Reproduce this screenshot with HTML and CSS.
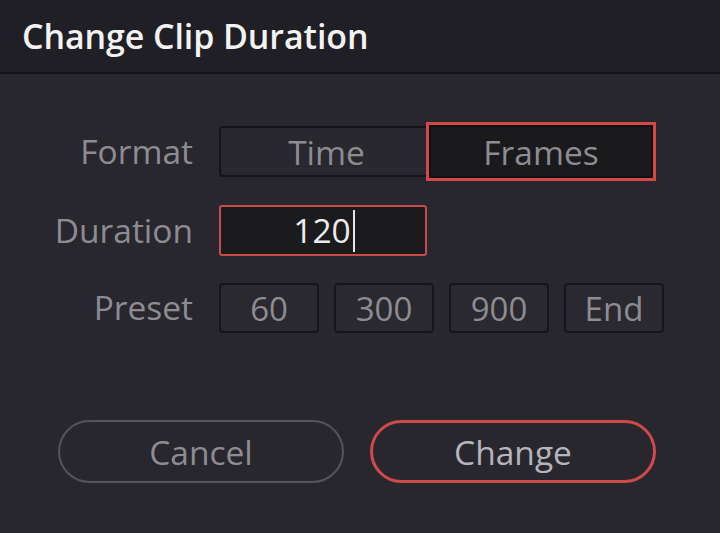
FILE: index.html
```html
<!DOCTYPE html>
<html>
<head>
<meta charset="utf-8">
<link rel="stylesheet" href="styles.css">
</head>
<body>
<div class="dialog">
  <div class="titlebar"><span class="title">Change Clip Duration</span></div>
  <div class="content">
    <div class="row row-format">
      <div class="label">Format</div>
      <div class="segmented">
        <div class="seg seg-time">Time</div>
        <div class="seg seg-frames">Frames</div>
      </div>
    </div>
    <div class="row row-duration">
      <div class="label">Duration</div>
      <div class="input"><span class="value">120</span><span class="caret"></span></div>
    </div>
    <div class="row row-preset">
      <div class="label">Preset</div>
      <div class="presets">
        <div class="preset">60</div>
        <div class="preset">300</div>
        <div class="preset">900</div>
        <div class="preset">End</div>
      </div>
    </div>
    <div class="actions">
      <div class="btn btn-cancel">Cancel</div>
      <div class="btn btn-change">Change</div>
    </div>
  </div>
</div>
</body>
</html>
```
FILE: styles.css
```css
html, body {
  margin: 0;
  padding: 0;
  background: #28272d;
  font-family: "Open Sans", "Noto Sans", sans-serif;
}
.dialog {
  width: 720px;
  height: 533px;
  overflow: hidden;
}
.titlebar {
  height: 72px;
  background: #201f25;
  border-bottom: 2px solid #141317;
  display: flex;
  align-items: center;
  padding-left: 22px;
}
.title {
  color: #f2f2f2;
  font-size: 34px;
  font-weight: 600;
  margin-top: -1px;
  letter-spacing: -0.1px;
}
.content {
  padding-top: 48px;
}
.row {
  display: flex;
  align-items: center;
}
.label {
  width: 193px;
  text-align: right;
  color: #8d8c92;
  font-size: 33.5px;
  margin-right: 26px;
  line-height: 1;
}
.row-format { height: 59px; }
.row-duration { height: 51px; margin-top: 24px; }
.row-preset { height: 50px; margin-top: 27px; }

.segmented {
  display: flex;
  align-items: center;
}
.seg {
  display: flex;
  align-items: center;
  justify-content: center;
  color: #8d8c92;
  font-size: 33.5px;
  box-sizing: border-box;
}
.seg-time {
  width: 209px;
  height: 51px;
  border: 2px solid #151418;
  border-right: none;
  border-radius: 4px 0 0 4px;
  background: #29282e;
  padding-left: 4px;
}
.seg-frames {
  width: 230px;
  height: 59px;
  border: 3px solid #d64848;
  background: #1a191c;
  margin-left: -2px;
  box-shadow: inset 0 0 0 2px #111013;
}

.input {
  width: 208px;
  height: 51px;
  box-sizing: border-box;
  border: 2px solid #c94a4a;
  border-radius: 3px;
  background: #1b1a1d;
  display: flex;
  align-items: center;
  justify-content: center;
  padding-left: 2px;
}
.value {
  color: #ececec;
  font-size: 33.5px;
  line-height: 1;
}
.caret {
  width: 2px;
  height: 42px;
  background: #e6e6e6;
  margin-left: 2px;
}

.presets {
  display: flex;
  gap: 15px;
}
.preset {
  width: 100px;
  height: 50px;
  box-sizing: border-box;
  border: 2px solid #161519;
  border-radius: 4px;
  background: #2a292f;
  display: flex;
  align-items: center;
  justify-content: center;
  color: #8d8c92;
  font-size: 33px;
}

.actions {
  display: flex;
  gap: 26px;
  margin-top: 87px;
  padding-left: 58px;
}
.btn {
  width: 286px;
  height: 63px;
  box-sizing: border-box;
  border-radius: 32px;
  display: flex;
  align-items: center;
  justify-content: center;
  font-size: 33.5px;
}
.btn-cancel {
  border: 2px solid #55545b;
  color: #8d8c92;
}
.btn-change {
  border: 3px solid #d04a4b;
  color: #b6b5bb;
}
```
